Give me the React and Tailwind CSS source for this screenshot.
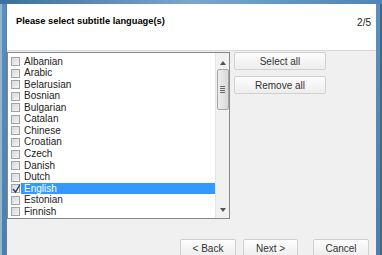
const LANGUAGES = [
  "Albanian",
  "Arabic",
  "Belarusian",
  "Bosnian",
  "Bulgarian",
  "Catalan",
  "Chinese",
  "Croatian",
  "Czech",
  "Danish",
  "Dutch",
  "English",
  "Estonian",
  "Finnish",
];

function CheckBox({ checked }) {
  return (
    <div className="relative ml-[3px] h-[9px] w-[9px] shrink-0 border border-[#a3a3a3] bg-gradient-to-br from-[#d9d9d9] to-[#f4f4f4]">
      {checked && (
        <svg className="absolute -left-[1px] -top-[2px] h-[11px] w-[11px]" viewBox="0 0 11 11">
          <path d="M2 6l2.5 3L9 1.5" fill="none" stroke="#2a3a6a" strokeWidth="1.4" />
        </svg>
      )}
    </div>
  );
}

function WinButton({ children, className = "" }) {
  return (
    <button
      type="button"
      className={`flex shrink-0 items-center justify-center rounded-[2px] border border-[#d0d0d0] bg-gradient-to-b from-[#fdfdfd] to-[#ededed] text-[10px] text-[#333] ${className}`}
    >
      {children}
    </button>
  );
}

function ScrollBar() {
  return (
    <div className="flex w-[14px] shrink-0 flex-col items-center border-l border-[#e6e6e6] bg-[#f1f1f1]">
      <svg className="mt-[8px] h-[4px] w-[6px]" viewBox="0 0 6 4">
        <path d="M0 4L3 0L6 4Z" fill="#555" />
      </svg>
      <div className="mt-[4px] flex h-[41px] w-[12px] flex-col items-center justify-center gap-[1px] rounded-[2px] border border-[#a5a5a5] bg-gradient-to-r from-[#eeeeee] to-[#d8d8d8]">
        <div className="h-px w-[5px] bg-[#666]" />
        <div className="h-px w-[5px] bg-[#666]" />
        <div className="h-px w-[5px] bg-[#666]" />
        <div className="h-px w-[5px] bg-[#666]" />
      </div>
      <div className="flex-1" />
      <svg className="mb-[6px] h-[4px] w-[6px]" viewBox="0 0 6 4">
        <path d="M0 0L6 0L3 4Z" fill="#555" />
      </svg>
    </div>
  );
}

export default function App() {
  return (
    <div className="flex h-[255px] w-[382px] flex-col overflow-hidden font-['Liberation_Sans',Arial,sans-serif]">
      <div className="h-[4px] shrink-0 bg-gradient-to-r from-[#3f6f9a] via-[#7aa6cc] to-[#4e84b6]" />
      <div className="flex flex-1">
        <div className="flex w-[6px] shrink-0">
          <div className="w-[2px] bg-[#8fb6d3]" />
          <div className="w-[4px] bg-gradient-to-b from-[#5a8fc0] to-[#4f7fa8]" />
        </div>
        <div className="flex flex-1 flex-col border-l border-[#5d7f9c] bg-[#f0f0f0]">
          <div className="flex h-[47px] shrink-0 items-start justify-between border-b border-[#d8d8d8] bg-white pl-[9px] pr-[5px] pt-[11px]">
            <span className="text-[9.3px] font-bold text-black">Please select subtitle language(s)</span>
            <span className="text-[10px] text-[#222]">2/5</span>
          </div>
          <div className="flex h-[188px] shrink-0 pt-[1px]">
            <div className="flex h-[167px] w-[223px] shrink-0 border border-[#828790] bg-white">
              <div className="flex flex-1 flex-col pt-[3px]">
                {LANGUAGES.map((lang) => (
                  <div key={lang} className="flex h-[11.54px] items-center">
                    <CheckBox checked={lang === "English"} />
                    <div
                      className={`ml-[1px] flex h-full flex-1 items-center pl-[3px] text-[10px] leading-none ${
                        lang === "English" ? "bg-[#3399ff] text-white" : "text-[#222]"
                      }`}
                    >
                      {lang}
                    </div>
                  </div>
                ))}
              </div>
              <ScrollBar />
            </div>
            <div className="ml-[4px] flex flex-col gap-[6px]">
              <WinButton className="h-[18px] w-[92px]">Select all</WinButton>
              <WinButton className="h-[18px] w-[92px]">Remove all</WinButton>
            </div>
          </div>
          <div className="flex shrink-0 items-start justify-end pr-[7px]">
            <WinButton className="h-[19px] w-[56px]">&lt; Back</WinButton>
            <WinButton className="ml-[7px] h-[19px] w-[55px]">Next &gt;</WinButton>
            <WinButton className="ml-[15px] h-[19px] w-[56px]">Cancel</WinButton>
          </div>
        </div>
        <div className="flex w-[6px] shrink-0">
          <div className="w-[4px] bg-gradient-to-b from-[#5a8fc0] to-[#4f7fa8]" />
          <div className="w-[2px] bg-[#3b6a8f]" />
        </div>
      </div>
    </div>
  );
}
